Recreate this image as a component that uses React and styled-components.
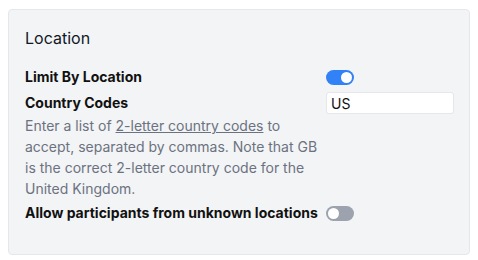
import styled, { createGlobalStyle } from 'styled-components'

const GlobalStyle = createGlobalStyle`
  body {
    margin: 0;
    background: #ffffff;
    font-family: Inter, "Noto Sans", sans-serif;
  }
`

const Page = styled.div`
  padding: 9px 8px 5px 8px;
`

const Panel = styled.section`
  box-sizing: border-box;
  width: 462px;
  height: 246px;
  background: #f3f4f6;
  border: 1px solid #e5e7eb;
  border-radius: 4px;
  padding: 16px 16px;
`

const Title = styled.h2`
  margin: 0 0 17px 0;
  font-size: 16px;
  line-height: 24px;
  font-weight: 400;
  color: #111827;
`

const Settings = styled.div`
  display: grid;
  grid-template-columns: max-content auto;
  column-gap: 8px;
  row-gap: 5px;
  align-items: center;
  justify-items: start;
`

const Label = styled.label`
  font-size: 14px;
  font-weight: 700;
  line-height: 20px;
  color: #111111;
`

const Help = styled.p`
  grid-column: 1 / 2;
  margin: -4px 0 -1px 0;
  width: 293px;
  font-size: 14px;
  line-height: 21px;
  color: #6b7280;
`

const HelpLink = styled.a`
  color: #6b7280;
  text-decoration: underline;
`

const Track = styled.span`
  display: inline-flex;
  align-items: center;
  box-sizing: border-box;
  width: 28px;
  height: 15px;
  padding: 0 2px;
  border-radius: 8px;
  background: ${(p) => (p.$on ? '#3182f6' : '#9ca3af')};
  justify-content: ${(p) => (p.$on ? 'flex-end' : 'flex-start')};
`

const Knob = styled.span`
  width: 11px;
  height: 11px;
  border-radius: 50%;
  background: #ffffff;
`

const TextInput = styled.input`
  box-sizing: border-box;
  width: 128px;
  height: 22px;
  padding: 0 4px;
  border: 1px solid #e5e7eb;
  border-radius: 3px;
  background: #ffffff;
  font-family: Inter, "Noto Sans", sans-serif;
  font-size: 14px;
  color: #111111;
  outline: none;
`

function Toggle({ on }) {
  return (
    <Track $on={on}>
      <Knob />
    </Track>
  )
}

export default function App() {
  return (
    <Page>
      <GlobalStyle />
      <Panel>
        <Title>Location</Title>
        <Settings>
          <Label>Limit By Location</Label>
          <Toggle on />
          <Label>Country Codes</Label>
          <TextInput defaultValue="US" />
          <Help>
            Enter a list of <HelpLink href="#">2-letter country codes</HelpLink> to
            accept, separated by commas. Note that GB is the correct 2-letter
            country code for the United Kingdom.
          </Help>
          <div />
          <Label>Allow participants from unknown locations</Label>
          <Toggle on={false} />
        </Settings>
      </Panel>
    </Page>
  )
}
